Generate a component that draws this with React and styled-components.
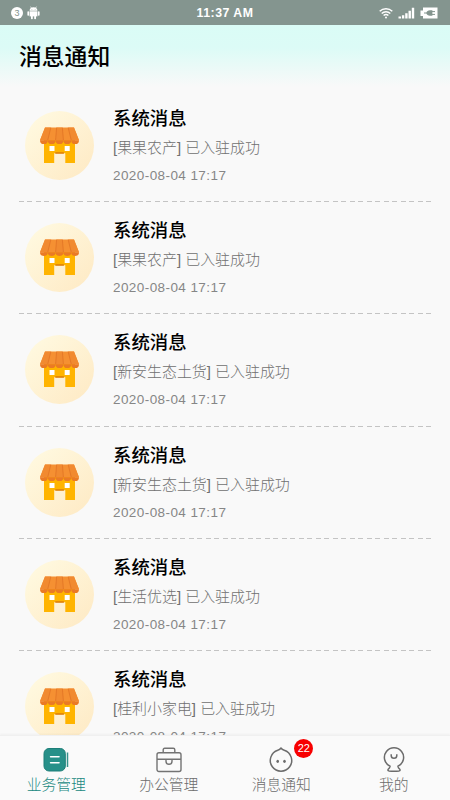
import React from 'react';
import styled, {createGlobalStyle} from 'styled-components';

const GlobalStyle = createGlobalStyle`
    * {
        box-sizing: border-box;
    }
    body {
        margin: 0;
        background: #f9f9f9;
        font-family: "Liberation Sans", "Noto Sans CJK SC", sans-serif;
    }
`;

const Screen = styled.div`
    display: flex;
    flex-direction: column;
    width: 450px;
    height: 800px;
    overflow: hidden;
    background: #f9f9f9;
`;

const StatusBar = styled.div`
    display: grid;
    grid-template-columns: 1fr auto 1fr;
    align-items: center;
    flex: none;
    height: 25px;
    padding: 0 12px 0 11px;
    background: #84958f;
    color: #fff;
`;

const StatusGroup = styled.div`
    display: flex;
    align-items: center;
    justify-content: ${({$end}) => $end ? 'flex-end' : 'flex-start'};
    gap: ${({$end}) => $end ? '5px' : '4px'};
    svg {
        display: block;
    }
`;

const Count = styled.span`
    width: 12px;
    height: 12px;
    border-radius: 50%;
    background: #fff;
    color: #84958f;
    font-size: 9px;
    line-height: 12px;
    text-align: center;
`;

const Clock = styled.span`
    font-size: 12.3px;
    font-weight: bold;
    line-height: 24px;
    letter-spacing: 0.5px;
    padding: 1px 0 0 1px;
`;

const Header = styled.header`
    flex: none;
    height: 65px;
    padding: 16px 19px 0;
    background: linear-gradient(#dafcf6 0, #dcfbf6 35%, #f9f9f9 95%);
`;

const HeaderTitle = styled.h1`
    margin: 0;
    color: #000;
    font-size: 22.8px;
    font-weight: 500;
    line-height: 33px;
`;

const List = styled.ul`
    flex: 1;
    min-height: 0;
    margin: 0;
    padding: 0 18px 0 19px;
    overflow: hidden;
    list-style: none;
`;

const Row = styled.li`
    display: flex;
    align-items: flex-start;
    gap: 19px;
    height: 112.2px;
    padding: 21px 0 0 6px;
    background: repeating-linear-gradient(90deg, #c4c4c4 0 5px, transparent 5px 8.48px) bottom / 100% 1px no-repeat;
`;

const Avatar = styled.div`
    display: flex;
    align-items: center;
    justify-content: center;
    flex: none;
    width: 69px;
    height: 69px;
    border-radius: 50%;
    background: linear-gradient(135deg, #fff8de 15%, #feeac5 95%);
`;

const Info = styled.div`
    display: flex;
    flex-direction: column;
    margin-top: -5px;
`;

const RowTitle = styled.h2`
    margin: 0;
    color: #000;
    font-size: 18.4px;
    font-weight: 500;
    line-height: 26px;
`;

const RowText = styled.p`
    margin: 5px 0 0;
    color: #707070;
    font-size: 14.95px;
    font-weight: 300;
    line-height: 22px;
    white-space: nowrap;
`;

const RowTime = styled.time`
    margin-top: 7px;
    color: #868686;
    font-size: 13.5px;
    line-height: 20px;
    letter-spacing: 0.42px;
`;

const TabBar = styled.nav`
    display: grid;
    grid-template-columns: repeat(4, 1fr);
    flex: none;
    height: 65px;
    border-top: 1px solid #f0f0f0;
    background: #fafafa;
    box-shadow: 0 -1px 2px rgba(0, 0, 0, 0.04);
`;

const TabItem = styled.a`
    display: flex;
    flex-direction: column;
    align-items: center;
    padding-top: 11px;
    color: ${({$active}) => $active ? '#188880' : '#6c6c6c'};
    font-size: 14.8px;
    font-weight: 300;
    line-height: 22px;
    svg {
        display: block;
    }
`;

const IconBox = styled.span`
    position: relative;
    height: 27px;
`;

const Badge = styled.span`
    position: absolute;
    top: -8px;
    left: 26px;
    width: 19px;
    height: 19px;
    border-radius: 50%;
    background: #f70000;
    color: #fff;
    font-size: 11px;
    line-height: 19px;
    text-align: center;
`;

const AndroidIcon = () => (
    <svg width="13" height="14" viewBox="0 0 13 14" fill="#fff">
        <path d="M2.6 4.8a3.9 3.6 0 0 1 7.8 0z"/>
        <path d="M3.5.6l1.3 2M9.5.6l-1.3 2" stroke="#fff" strokeWidth=".7"/>
        <path d="M2.6 5.3h7.8v5.1H2.6z"/>
        <rect x=".4" y="5.2" width="1.7" height="4.6" rx=".8"/>
        <rect x="10.9" y="5.2" width="1.7" height="4.6" rx=".8"/>
        <rect x="4" y="9" width="1.8" height="4.2" rx=".8"/>
        <rect x="7.2" y="9" width="1.8" height="4.2" rx=".8"/>
        <circle cx="4.9" cy="3.4" r=".4" fill="#84958f"/>
        <circle cx="8.1" cy="3.4" r=".4" fill="#84958f"/>
    </svg>
)

const WifiIcon = () => (
    <svg width="14" height="12" viewBox="0 0 14 12" fill="none" stroke="#fff" strokeWidth="1.4">
        <path d="M.7 4.3a9 9 0 0 1 12.6 0M2.7 6.5a6.2 6.2 0 0 1 8.6 0M4.6 8.6a3.5 3.5 0 0 1 4.8 0"/>
        <circle cx="7" cy="10.6" r="1" fill="#fff" stroke="none"/>
    </svg>
)

const SignalIcon = () => (
    <svg width="17" height="12" viewBox="0 0 17 12" fill="#fff">
        <path d="M.5 9.5H3v2H.5zM3.9 8.3h2.4v3.2H3.9zM7.2 6.3h2.4v5.2H7.2zM10.5 3.8h2.4v7.7h-2.4zM13.8.8h2.4v10.7h-2.4z"/>
    </svg>
)

const BatteryIcon = () => (
    <svg width="18" height="12" viewBox="0 0 18 12">
        <path d="M3 .5h14.5v11H3V9H.5V3.5H3z" fill="#fff"/>
        <path d="M4 6h3M12 4.6h3M12 7.4h3" stroke="#84958f" strokeWidth="1"/>
        <path d="M12.4 3.2v5.6H10Q7 8.8 6.3 6 7 3.2 10 3.2z" fill="#84958f"/>
    </svg>
)

const ShopIcon = () => (
    <svg width="39" height="37" viewBox="0 0 39 37">
        <path d="M4 13h31v23H25.3V26.3H14.2V36H4z" fill="#ffb400"/>
        <path d="M9.5 19h5v5h-5zM24.7 19h5v5h-5z" fill="#fff"/>
        <path d="M15.3 25.2h8.6v1.5h-8.6z" fill="#dc7b08"/>
        <path d="M5 .5h29l5 12.8H0z" fill="#f59032"/>
        <path d="M5 .5h5.8L7.8 13.3H0zM16.6.5h5.8l1 12.8h-7.8zM28.2.5H34l5 12.8h-7.8z" fill="#f18a30"/>
        <path
            d="M0 13.2h7.8a3.9 3.9 0 0 1-7.8 0zM7.8 13.2h7.8a3.9 3.9 0 0 1-7.8 0zM15.6 13.2h7.8a3.9 3.9 0 0 1-7.8 0zM23.4 13.2h7.8a3.9 3.9 0 0 1-7.8 0zM31.2 13.2H39a3.9 3.9 0 0 1-7.8 0z"
            fill="#ea7a25"
        />
        <path d="M10.8.7L7.8 13M16.6.7l-1 12.3M22.4.7l1 12.3M28.2.7l3 12.3" stroke="#dc6c22" strokeWidth=".6"/>
    </svg>
)

const BusinessIcon = () => (
    <svg width="26" height="26" viewBox="0 0 26 26" fill="none">
        <rect x="1" y="1.5" width="21.3" height="22.5" rx="5" fill="#279089" stroke="#1d7f78"/>
        <path d="M7.6 9.8h8.4M7.6 15.8h8.4" stroke="#fff" strokeWidth="1.6" strokeLinecap="round"/>
        <path d="M24.5 5.5v14.5" stroke="#35938c" strokeWidth="1.5"/>
    </svg>
)

const OfficeIcon = () => (
    <svg width="26" height="26" viewBox="0 0 26 26" fill="none" stroke="#737373" strokeWidth="1.4">
        <rect x="1" y="5.8" width="24" height="18.7" rx="2"/>
        <path d="M7.2 5.5V2.8Q7.2 1.3 8.7 1.3h8.6q1.5 0 1.5 1.5v2.7M1 12.3h24M10 12.5v1.8q0 3 3 3t3-3v-1.8"/>
    </svg>
)

const MessageIcon = () => (
    <svg width="26" height="26" viewBox="0 0 26 26" fill="none" stroke="#6c6c6c" strokeWidth="1.5">
        <path d="M9.8 3.3Q11.8 2.7 13 1q1.2 1.7 3.2 2.3a10.7 10.7 0 1 1-6.4 0z" strokeLinejoin="round"/>
        <ellipse cx="9.7" cy="14.3" rx="1.3" ry="1.6" fill="#6c6c6c" stroke="none"/>
        <ellipse cx="16.5" cy="14.3" rx="1.3" ry="1.6" fill="#6c6c6c" stroke="none"/>
    </svg>
)

const MineIcon = () => (
    <svg width="26" height="26" viewBox="0 0 26 26" fill="none" stroke="#6c6c6c" strokeWidth="1.5">
        <path
            d="M9.1 19.2a9.6 9.6 0 1 1 7.8 0q.3 1.9 1.8 2.9 1 1.3-.6 1.8-5.1.8-10.2 0-1.6-.5-.6-1.8 1.5-1 1.8-2.9z"
            strokeLinejoin="round"
        />
        <path d="M10.2 7.3v1.2q0 2.8 2.8 2.8t2.8-2.8V7.3"/>
    </svg>
)

const messages = [
    '[果果农产] 已入驻成功',
    '[果果农产] 已入驻成功',
    '[新安生态土货] 已入驻成功',
    '[新安生态土货] 已入驻成功',
    '[生活优选] 已入驻成功',
    '[桂利小家电] 已入驻成功'
];

const tabs = [
    {label: '业务管理', Icon: BusinessIcon, active: true},
    {label: '办公管理', Icon: OfficeIcon},
    {label: '消息通知', Icon: MessageIcon, badge: 22},
    {label: '我的', Icon: MineIcon}
];

const Message = ({text}) => {
    return (
        <Row>
            <Avatar><ShopIcon/></Avatar>
            <Info>
                <RowTitle>系统消息</RowTitle>
                <RowText>{text}</RowText>
                <RowTime>2020-08-04 17:17</RowTime>
            </Info>
        </Row>
    )
}

const App = () => {
    return (
        <Screen>
            <GlobalStyle/>
            <StatusBar>
                <StatusGroup>
                    <Count>3</Count>
                    <AndroidIcon/>
                </StatusGroup>
                <Clock>11:37 AM</Clock>
                <StatusGroup $end>
                    <WifiIcon/>
                    <SignalIcon/>
                    <BatteryIcon/>
                </StatusGroup>
            </StatusBar>
            <Header>
                <HeaderTitle>消息通知</HeaderTitle>
            </Header>
            <List>
                {messages.map((text, i) => <Message key={i} text={text}/>)}
            </List>
            <TabBar>
                {tabs.map(({label, Icon, active, badge}) => (
                    <TabItem key={label} $active={active}>
                        <IconBox>
                            <Icon/>
                            {badge && <Badge>{badge}</Badge>}
                        </IconBox>
                        {label}
                    </TabItem>
                ))}
            </TabBar>
        </Screen>
    );
}

export default App;
